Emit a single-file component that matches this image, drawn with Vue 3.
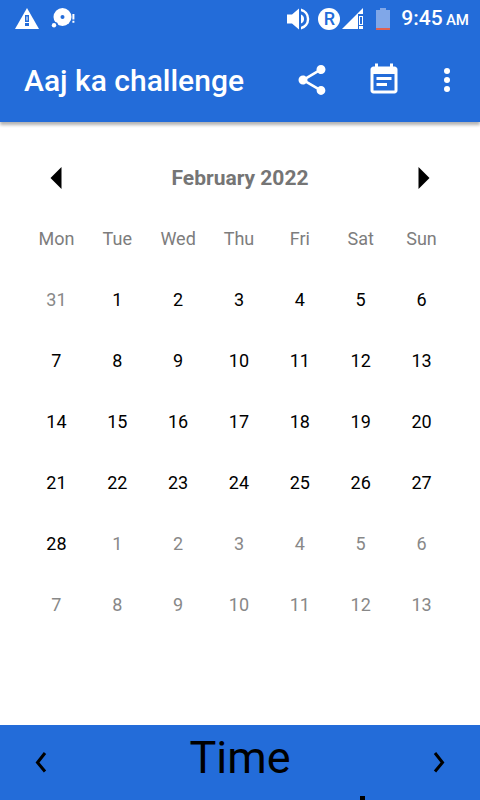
<template>
  <div class="app">
    <div class="status">
      <div class="status__group">
        <svg class="status__warning" width="24" height="22" viewBox="0 0 24 22">
          <path d="M12 0 24 21H0Z" fill="#fff" />
          <path d="M10 7h4v7h-4zM10 15h4v3h-4z" fill="#236cd9" />
          <path d="M11.5 8.5h1v4h-1z" fill="#fff" />
        </svg>
        <svg width="26" height="22" viewBox="0 0 26 22">
          <circle cx="11.5" cy="9" r="9" fill="#fff" />
          <circle cx="11.5" cy="9" r="2" fill="#236cd9" />
          <circle cx="4" cy="17" r="3" fill="#236cd9" />
          <circle cx="3" cy="17.3" r="2.2" fill="#fff" />
          <path d="M21.4 6h2v5.5h-2zM21.4 12.8h2v2h-2z" fill="#fff" />
        </svg>
      </div>
      <div class="status__group">
        <svg class="status__sound" width="24" height="24" viewBox="0 0 24 24">
          <path d="M0 7.5v9h5l7 6V1.500l-7 6z" fill="#fff" />
          <path d="M14 7.4a5 5 0 0 1 0 9.2zM14 1.5v2.8a8 8 0 0 1 0 15.4v2.8a10.8 10.8 0 0 0 0-21z" fill="#fff" />
        </svg>
        <span class="status__roaming">R</span>
        <svg class="status__signal" width="22" height="22" viewBox="0 0 22 22">
          <path d="M21 0v6h-5v15H0z" fill="#fff" />
          <path d="M17 8h4v9h-4zM17 18h4v3h-4z" fill="#fff" />
          <path d="M18 9h2v7h-2z" fill="#236cd9" />
        </svg>
        <svg class="status__battery" width="14" height="22" viewBox="0 0 14 22">
          <path d="M4 0h6v2h4v18H0V2h4z" fill="#80a7e8" />
          <path d="M0 20h14v2H0z" fill="#e0614f" />
        </svg>
        <span class="status__time">9:45 <small>AM</small></span>
      </div>
    </div>

    <header class="toolbar">
      <h1 class="toolbar__title">Aaj ka challenge</h1>
      <button type="button" class="btn" aria-label="Share">
        <svg width="36" height="36" viewBox="0 0 24 24" fill="#fff">
          <path
            d="M18 16.08c-.76 0-1.44.3-1.96.77L8.91 12.7c.05-.23.09-.46.09-.7s-.04-.47-.09-.7l7.05-4.11c.54.5 1.25.81 2.04.81 1.66 0 3-1.34 3-3s-1.34-3-3-3-3 1.34-3 3c0 .24.04.47.09.7L8.04 9.81C7.5 9.31 6.79 9 6 9c-1.66 0-3 1.34-3 3s1.34 3 3 3c.79 0 1.5-.31 2.04-.81l7.12 4.16c-.05.21-.08.43-.08.65 0 1.61 1.31 2.92 2.92 2.92s2.92-1.31 2.92-2.92-1.31-2.92-2.92-2.92z"
          />
        </svg>
      </button>
      <button type="button" class="btn" aria-label="Events">
        <svg width="36" height="36" viewBox="0 0 24 24" fill="#fff">
          <path
            d="M17 10H7v2h10v-2zm2-7h-1V1h-2v2H8V1H6v2H5c-1.11 0-1.99.9-1.99 2L3 19c0 1.1.89 2 2 2h14c1.1 0 2-.9 2-2V5c0-1.1-.9-2-2-2zm0 16H5V8h14v11zm-5-5H7v2h7v-2z"
          />
        </svg>
      </button>
      <button type="button" class="btn btn--more" aria-label="More options">
        <svg width="8" height="24" viewBox="0 0 8 24" fill="#fff">
          <circle cx="4" cy="3" r="3" />
          <circle cx="4" cy="12" r="3" />
          <circle cx="4" cy="21" r="3" />
        </svg>
      </button>
    </header>

    <main class="calendar">
      <div class="calendar__header">
        <button type="button" class="btn calendar__arrow" aria-label="Previous month">
          <svg width="12" height="22" viewBox="0 0 12 22"><path d="M11.5 0v22L.5 11z" /></svg>
        </button>
        <h2 class="calendar__month">February 2022</h2>
        <button type="button" class="btn calendar__arrow" aria-label="Next month">
          <svg width="12" height="22" viewBox="0 0 12 22"><path d="M.5 0v22l11-11z" /></svg>
        </button>
      </div>
      <div class="calendar__body">
        <table class="calendar__table">
          <thead>
            <tr>
              <th v-for="name in weekdays" :key="name" scope="col">{{ name }}</th>
            </tr>
          </thead>
          <tbody>
            <tr v-for="(week, index) in weeks" :key="index">
              <td v-for="day in week" :key="day.id">
                <button type="button" :class="['btn', 'day', day.outside ? 'day--outside' : '']">
                  {{ day.label }}
                </button>
              </td>
            </tr>
          </tbody>
        </table>
      </div>
    </main>

    <footer class="timer">
      <button type="button" class="btn timer__arrow" aria-label="Previous">
        <svg width="12" height="22" viewBox="0 0 12 22"><path d="M10 1 2.5 10.500l7.500 9" /></svg>
      </button>
      <div class="timer__body">
        <span class="timer__title">Time</span>
        <span class="timer__mark"></span>
      </div>
      <button type="button" class="btn timer__arrow" aria-label="Next">
        <svg width="12" height="22" viewBox="0 0 12 22"><path d="m2 1 7.500 9.500-7.500 9" /></svg>
      </button>
    </footer>
  </div>
</template>

<script setup>
const weekdays = ['Mon', 'Tue', 'Wed', 'Thu', 'Fri', 'Sat', 'Sun'];

// six weeks, starting on Monday 31 January 2022
const weeks = Array.from({ length: 6 }, (_, week) =>
  Array.from({ length: 7 }, (_, weekday) => {
    const date = new Date(2022, 0, 31 + week * 7 + weekday);
    return {
      id: `${date.getMonth()}-${date.getDate()}`,
      label: date.getDate(),
      outside: date.getMonth() !== 1,
    };
  })
);
</script>

<style>
body {
  margin: 0;
}
</style>

<style scoped>
.app {
  display: flex;
  flex-direction: column;
  min-height: 100vh;
  background: #fff;
  color: #000;
  font-family: Roboto, "Noto Sans", sans-serif;
}

svg {
  display: block;
}

.btn {
  display: flex;
  align-items: center;
  justify-content: center;
  padding: 0;
  border: none;
  background: none;
  color: inherit;
  font: inherit;
}

.status {
  display: flex;
  justify-content: space-between;
  align-items: center;
  height: 38px;
  padding: 0 11px 0 15px;
  background: #236cd9;
  color: #fff;
}

.status__group {
  display: flex;
  align-items: center;
}

.status__warning {
  margin-right: 12px;
}

.status__sound {
  margin-right: 7px;
}

.status__roaming {
  width: 22px;
  height: 22px;
  margin-right: 2px;
  border-radius: 50%;
  background: #fff;
  color: #236cd9;
  font-size: 18px;
  font-weight: 500;
  line-height: 22px;
  text-align: center;
}

.status__signal {
  margin-right: 12px;
}

.status__battery {
  margin-right: 11px;
}

.status__time {
  font-size: 21px;
  font-weight: 500;
  line-height: 40px;
  white-space: nowrap;
}

.status__time small {
  margin-left: -2px;
  font-size: 15px;
}

.toolbar {
  display: flex;
  align-items: center;
  height: 84px;
  padding: 0 24px;
  background: #236cd9;
  box-shadow: 0 3px 3px rgba(0, 0, 0, 0.3);
  color: #fff;
}

.toolbar__title {
  flex: 1;
  margin: 0;
  font-size: 30px;
  font-weight: 500;
}

.toolbar .btn {
  margin-left: 36px;
}

.toolbar .btn--more {
  margin-left: 41px;
  margin-right: 5px;
}

.calendar {
  flex: 1;
  padding-top: 25px;
}

.calendar__header {
  display: flex;
  align-items: center;
  justify-content: space-between;
  height: 61px;
  padding: 0 25px;
}

.calendar__arrow {
  width: 61px;
  height: 61px;
}

.calendar__month {
  margin: 0;
  color: #757575;
  font-size: 21px;
  font-weight: 700;
}

.calendar__body {
  padding: 0 28px 0 26px;
}

.calendar__table {
  width: 100%;
  table-layout: fixed;
  border-collapse: collapse;
  font-size: 18px;
}

.calendar__table th,
.calendar__table td {
  height: 61px;
  padding: 0;
}

.calendar__table th {
  color: #7d7d7d;
  font-weight: 400;
}

.day {
  width: 100%;
  height: 61px;
}

.day--outside {
  color: #888;
}

.timer {
  display: flex;
  height: 75px;
  overflow: hidden;
  background: #236cd9;
}

.timer__arrow {
  width: 82px;
  height: 75px;
}

.timer__arrow path {
  fill: none;
  stroke: #000;
  stroke-width: 3;
}

.timer__body {
  flex: 1;
  display: flex;
  flex-direction: column;
}

.timer__title {
  font-size: 45px;
  line-height: 66px;
  text-align: center;
}

/* top of the next line, cut off by the bar */
.timer__mark {
  width: 5px;
  height: 4px;
  margin-top: 5px;
  margin-left: 88%;
  background: #000;
}
</style>
